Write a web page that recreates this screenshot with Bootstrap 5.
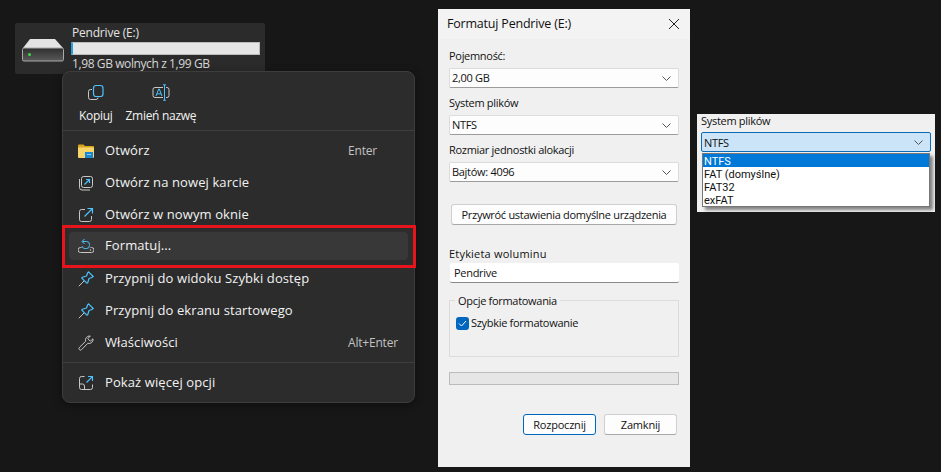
<!DOCTYPE html>
<html lang="pl">
<head>
<meta charset="UTF-8">
<meta name="viewport" content="width=device-width, initial-scale=1">
<title>Formatuj Pendrive</title>
<link href="https://cdn.jsdelivr.net/npm/bootstrap@5.3.0/dist/css/bootstrap.min.css" rel="stylesheet">
<style>
html, body { height: 100%; }
body { background: #171717; font-family: "Open Sans", "Noto Sans", sans-serif; overflow: hidden; position: relative; margin: 0; }
svg { display: block; flex: none; }

/* windows on the desktop */
.win { position: absolute; }

.drive-tile { left: 15px; top: 23px; width: 250px; height: 51px; background: #2b2b2b; border-radius: 2px; color: #e4e4e4; font-size: 12px; line-height: 16px; padding: 2px 5px 0 7px; gap: 7px; }
.drive-icon { margin-top: 2px; }
.drive-name { letter-spacing: -.2px; padding-left: 1px; }
.drive-bar { height: 13px; width: 189px; background: #e6e6e6; border: 1px solid #bcbcbc; border-left: 2px solid #26a0da; margin: 1px 0 1px; }
.drive-free { letter-spacing: -.4px; color: #d8d8d8; padding-left: 1px; }

.ctx-menu { left: 62px; top: 71px; width: 353px; height: 332px; background: #2c2c2c; border: 1px solid #3d3d3d; border-radius: 8px; color: #f2f2f2; font-size: 13px; padding: 0 6px; box-shadow: 0 2px 8px rgba(0, 0, 0, .4); }
.ctx-tools { height: 58px; gap: 9px; padding-left: 10px; }
.ctx-tool { font-size: 12px; gap: 6px; letter-spacing: -.3px; line-height: 16px; padding-top: 5px; }
.ctx-sep { height: 1px; background: #3e3e3e; margin: 0 -6px; }
.ctx-row { height: 32px; padding: 0 10px 0 9px; gap: 11px; letter-spacing: .1px; }
.ctx-row .ctx-icon { width: 16px; }
.ctx-key { margin-left: auto; width: 50px; font-size: 12px; color: #c2c2c2; letter-spacing: -.2px; white-space: nowrap; }
.ctx-hot { background: #383838; border-radius: 4px; height: 28px; margin: 1px 0 3px; }
.ctx-list { padding-top: 4px; }
.ctx-list2 { padding-top: 4px; }
.ctx-sep-low { margin-top: 3px; }
.red-frame { left: 62px; top: 225px; width: 354px; height: 43px; border: 3px solid #e8141c; }

.fmt-dialog { left: 438px; top: 9px; width: 252px; height: 458px; background: #f0f0f0; color: #111; font-size: 11px; line-height: 14px; letter-spacing: -.3px; }
.fmt-title { height: 30px; background: #f3f3f3; font-size: 12.5px; letter-spacing: -.2px; padding: 0 10px 0 9px; }
.fmt-body { padding: 10px 11px 0; }
.fmt-label { height: 14px; margin-bottom: 5px; }
.fmt-select { height: 20px; background: #fdfdfd; border: 1px solid #dcdcdc; border-bottom-color: #9c9c9c; border-radius: 2px; padding: 0 7px 0 2px; margin-bottom: 8px; }
.fmt-wide { margin: 22px 1px 22px 2px; height: 21px; width: 226px; background: #fdfdfd; border: 1px solid #d0d0d0; border-bottom-color: #a8a8a8; border-radius: 3px; color: #111; font-size: 11px; line-height: 14px; padding: 0; letter-spacing: -.3px; }
.fmt-label-tight { margin-bottom: 2px; letter-spacing: .2px; }
.fmt-input { height: 20px; background: #fff; border-bottom: 1px solid #8a8a8a; padding: 0 4px; margin-left: 1px; margin-bottom: 17px; border-radius: 2px; }
.fmt-group { height: 57px; border: 1px solid #dcdcdc; position: relative; padding: 15px 6px 0; margin-bottom: 15px; }
.fmt-legend { position: absolute; left: 5px; top: -7px; background: #f0f0f0; padding: 0 3px; }
.fmt-check { width: 13px; height: 13px; background: #0067c0; border-radius: 3px; margin-right: 2px; }
.fmt-progress { height: 13px; background: #e6e6e6; border: 1px solid #bcbcbc; margin-bottom: 29px; }
.fmt-btn { height: 21px; width: 73px; background: #fdfdfd; border: 1px solid #d0d0d0; border-bottom-color: #a8a8a8; border-radius: 3px; color: #111; font-size: 11px; line-height: 14px; padding: 0; letter-spacing: -.2px; }
.fmt-btn-main { border: 1px solid #0067c0; }
.fmt-btn-row { gap: 8px; padding-right: 2px; }

.fs-panel { left: 697px; top: 114px; width: 238px; height: 98px; background: #f0f0f0; color: #111; font-size: 11px; line-height: 13px; letter-spacing: -.3px; padding: 0 4px; }
.fs-select { height: 20px; background: #cce4f7; border: 1px solid #0a6cb8; border-radius: 2px; padding: 0 7px 0 2px; margin-top: 5px; width: 230px; }
.fs-list { position: absolute; left: 5px; top: 39px; width: 228px; height: 54px; background: #fff; border: 1px solid #767676; box-shadow: 3px 3px 3px rgba(0, 0, 0, .45); font-family: Roboto, "Open Sans", sans-serif; letter-spacing: 0; }
.fs-item { height: 13px; padding: 1px 0 0 1px; line-height: 13px; }
.fs-on { background: #0078d7; color: #fff; }
</style>
</head>
<body>

<!-- drive tile -->
<div class="win drive-tile d-flex">
  <svg class="drive-icon" width="42" height="42" viewBox="0 0 42 42">
    <defs><linearGradient id="driveFace" x1="0" y1="0" x2="0" y2="1"><stop offset="0" stop-color="#2e2e2e"/><stop offset="1" stop-color="#5a5a5a"/></linearGradient></defs>
    <path d="M8 12h25l8 9H1z" fill="#e3e3e3"/>
    <rect x=".5" y="21" width="41" height="13" rx="1.5" fill="url(#driveFace)" stroke="#a9a9a9"/>
    <rect x="6" y="26" width="3" height="3" rx="1.5" fill="#3fdc3f"/>
  </svg>
  <div>
    <div class="drive-name">Pendrive (E:)</div>
    <div class="drive-bar"></div>
    <div class="drive-free">1,98 GB wolnych z 1,99 GB</div>
  </div>
</div>

<!-- context menu -->
<div class="win ctx-menu">
  <div class="ctx-tools d-flex align-items-center">
    <div class="ctx-tool d-flex flex-column align-items-center">
      <svg width="18" height="18" viewBox="0 0 18 18" fill="none">
        <path d="M5 5.500H3.500a2 2 0 0 0-2 2v6a2 2 0 0 0 2 2h5.500a2 2 0 0 0 2-2" stroke="#c8c8c8"/>
        <rect x="6.500" y="1.500" width="9.500" height="11" rx="2.500" stroke="#4cc2ff" stroke-width="1.200"/>
      </svg>
      <span>Kopiuj</span>
    </div>
    <div class="ctx-tool d-flex flex-column align-items-center ms-1">
      <svg width="18" height="18" viewBox="0 0 18 18" fill="none">
        <path d="M11 3.500H3a2 2 0 0 0-2 2v6a2 2 0 0 0 2 2h8M14 3.500h1a2 2 0 0 1 2 2v6a2 2 0 0 1-2 2h-1" stroke="#c8c8c8"/>
        <path d="M12.500 1v15M11 .800h3M11 16.200h3M4 12l2.700-7h.6L10 12M5 9.800h4" stroke="#4cc2ff"/>
      </svg>
      <span>Zmień nazwę</span>
    </div>
  </div>
  <div class="ctx-sep"></div>

  <div class="ctx-list">
    <div class="ctx-row d-flex align-items-center">
      <svg class="ctx-icon" width="16" height="16" viewBox="0 0 16 16">
        <path d="M0 2.500a1 1 0 0 1 1-1h4.500l1.500 1.500h8a1 1 0 0 1 1 1V5H0z" fill="#d9a520"/>
        <path d="M0 4.500h16v9.500a1 1 0 0 1-1 1H1a1 1 0 0 1-1-1z" fill="#f8d568"/>
        <path d="M7 9h8v6H7z" fill="#1a86d8"/>
        <path d="M9 11h4v1H9z" fill="#8fd0ff"/>
      </svg>
      <span>Otwórz</span><span class="ctx-key">Enter</span>
    </div>
    <div class="ctx-row d-flex align-items-center">
      <svg class="ctx-icon" width="16" height="16" viewBox="0 0 16 16" fill="none">
        <path d="M1.500 4v8.500a2.500 2.500 0 0 0 2.500 2.500h8" stroke="#c8c8c8"/>
        <rect x="3.500" y="1.500" width="11" height="11" rx="2" stroke="#c8c8c8"/>
        <path d="M6.500 9.500 11.500 4.500M8 4.500h3.500V8" stroke="#4cc2ff" stroke-width="1.200"/>
      </svg>
      <span>Otwórz na nowej karcie</span>
    </div>
    <div class="ctx-row d-flex align-items-center">
      <svg class="ctx-icon" width="16" height="16" viewBox="0 0 16 16" fill="none">
        <path d="M7 2.500H3.500a2 2 0 0 0-2 2v8a2 2 0 0 0 2 2h8a2 2 0 0 0 2-2V9" stroke="#c8c8c8"/>
        <path d="M6.500 9.500 14 2M9.500 1.500H14.500V6.500" stroke="#4cc2ff" stroke-width="1.200"/>
      </svg>
      <span>Otwórz w nowym oknie</span>
    </div>
    <div class="ctx-row ctx-hot d-flex align-items-center">
      <svg class="ctx-icon" width="16" height="16" viewBox="0 0 16 16" fill="none">
        <path d="M3.500 9.500h-1a2.500 2.500 0 0 0 0 5h11a2.500 2.500 0 0 0 0-5h-1" stroke="#c8c8c8"/>
        <circle cx="12.500" cy="12" r=".7" fill="#c8c8c8"/>
        <path d="M4.500 3.500h4a3 3 0 0 1 3 3v1a3 3 0 0 1-3 3h-2a3 3 0 0 1-2.500-2.500M6.500 1 4 3.500 6.500 6" stroke="#4cc2ff"/>
      </svg>
      <span>Formatuj...</span>
    </div>
    <div class="ctx-row d-flex align-items-center">
      <svg class="ctx-icon" width="16" height="16" viewBox="0 0 16 16" fill="none">
        <path d="M10.500.800 15.200 5.500 13.800 6.500 11 7.500 9.800 11.500 8.800 12.200 3.800 7.200 4.500 6.200 8.500 5 9.500 2.200z" stroke="#4cc2ff" stroke-width="1.200" stroke-linejoin="round"/>
        <path d="M6 10 .800 15.200" stroke="#c8c8c8"/>
      </svg>
      <span>Przypnij do widoku Szybki dostęp</span>
    </div>
    <div class="ctx-row d-flex align-items-center">
      <svg class="ctx-icon" width="16" height="16" viewBox="0 0 16 16" fill="none">
        <path d="M10.500.800 15.200 5.500 13.800 6.500 11 7.500 9.800 11.500 8.800 12.200 3.800 7.200 4.500 6.200 8.500 5 9.500 2.200z" stroke="#4cc2ff" stroke-width="1.200" stroke-linejoin="round"/>
        <path d="M6 10 .800 15.200" stroke="#c8c8c8"/>
      </svg>
      <span>Przypnij do ekranu startowego</span>
    </div>
    <div class="ctx-row d-flex align-items-center">
      <svg class="ctx-icon" width="16" height="16" viewBox="0 0 16 16" fill="none">
        <path d="M11.500 1a4 4 0 0 0-3.800 5.200L1.400 12.400a1.500 1.500 0 0 0 2.200 2.200l6.200-6.300A4 4 0 0 0 15 3.800l-2.700 2.400-2.500-2.500L12.300 1z" stroke="#c8c8c8" stroke-linejoin="round"/>
      </svg>
      <span>Właściwości</span><span class="ctx-key">Alt+Enter</span>
    </div>
  </div>
  <div class="ctx-sep ctx-sep-low"></div>
  <div class="ctx-list2">
    <div class="ctx-row d-flex align-items-center">
      <svg class="ctx-icon" width="16" height="16" viewBox="0 0 16 16" fill="none">
        <path d="M6.500 1.500H3.500a2 2 0 0 0-2 2v9a2 2 0 0 0 2 2h9a2 2 0 0 0 2-2v-3M1.500 9h3a2 2 0 0 1 2 2v3.500" stroke="#c8c8c8"/>
        <path d="M8.500 7.500 14.500 1.500M10 1.500h4.500V6" stroke="#4cc2ff" stroke-width="1.100"/>
      </svg>
      <span>Pokaż więcej opcji</span>
    </div>
  </div>
</div>
<div class="win red-frame"></div>

<!-- format dialog -->
<div class="win fmt-dialog">
  <div class="fmt-title d-flex align-items-center justify-content-between">
    <span>Formatuj Pendrive (E:)</span>
    <svg width="12" height="12" viewBox="0 0 12 12" fill="none"><path d="M1 1l10 10M11 1 1 11" stroke="#222"/></svg>
  </div>
  <div class="fmt-body">
    <div class="fmt-label">Pojemność:</div>
    <div class="fmt-select d-flex align-items-center justify-content-between">
      <span>2,00 GB</span>
      <svg width="9" height="5" viewBox="0 0 9 5" fill="none"><path d="M.5.500l4 4 4-4" stroke="#555"/></svg>
    </div>
    <div class="fmt-label">System plików</div>
    <div class="fmt-select d-flex align-items-center justify-content-between">
      <span>NTFS</span>
      <svg width="9" height="5" viewBox="0 0 9 5" fill="none"><path d="M.5.500l4 4 4-4" stroke="#555"/></svg>
    </div>
    <div class="fmt-label">Rozmiar jednostki alokacji</div>
    <div class="fmt-select d-flex align-items-center justify-content-between">
      <span>Bajtów: 4096</span>
      <svg width="9" height="5" viewBox="0 0 9 5" fill="none"><path d="M.5.500l4 4 4-4" stroke="#555"/></svg>
    </div>
    <button type="button" class="btn fmt-wide d-block">Przywróć ustawienia domyślne urządzenia</button>
    <div class="fmt-label fmt-label-tight">Etykieta woluminu</div>
    <div class="fmt-input d-flex align-items-center">Pendrive</div>
    <div class="fmt-group">
      <span class="fmt-legend">Opcje formatowania</span>
      <div class="d-flex align-items-center">
        <span class="fmt-check d-flex align-items-center justify-content-center">
          <svg width="9" height="7" viewBox="0 0 9 7" fill="none"><path d="M1 3.500l2.500 2.500L8 1" stroke="#fff"/></svg>
        </span>
        <span>Szybkie formatowanie</span>
      </div>
    </div>
    <div class="fmt-progress"></div>
    <div class="fmt-btn-row d-flex justify-content-end">
      <button type="button" class="btn fmt-btn fmt-btn-main">Rozpocznij</button>
      <button type="button" class="btn fmt-btn">Zamknij</button>
    </div>
  </div>
</div>

<!-- file system dropdown -->
<div class="win fs-panel">
  <div>System plików</div>
  <div class="fs-select d-flex align-items-center justify-content-between">
    <span>NTFS</span>
    <svg width="9" height="5" viewBox="0 0 9 5" fill="none"><path d="M.5.500l4 4 4-4" stroke="#555"/></svg>
  </div>
  <div class="fs-list">
    <div class="fs-item fs-on">NTFS</div>
    <div class="fs-item">FAT (domyślne)</div>
    <div class="fs-item">FAT32</div>
    <div class="fs-item">exFAT</div>
  </div>
</div>

<script src="https://cdn.jsdelivr.net/npm/bootstrap@5.3.0/dist/js/bootstrap.bundle.min.js"></script>
</body>
</html>
